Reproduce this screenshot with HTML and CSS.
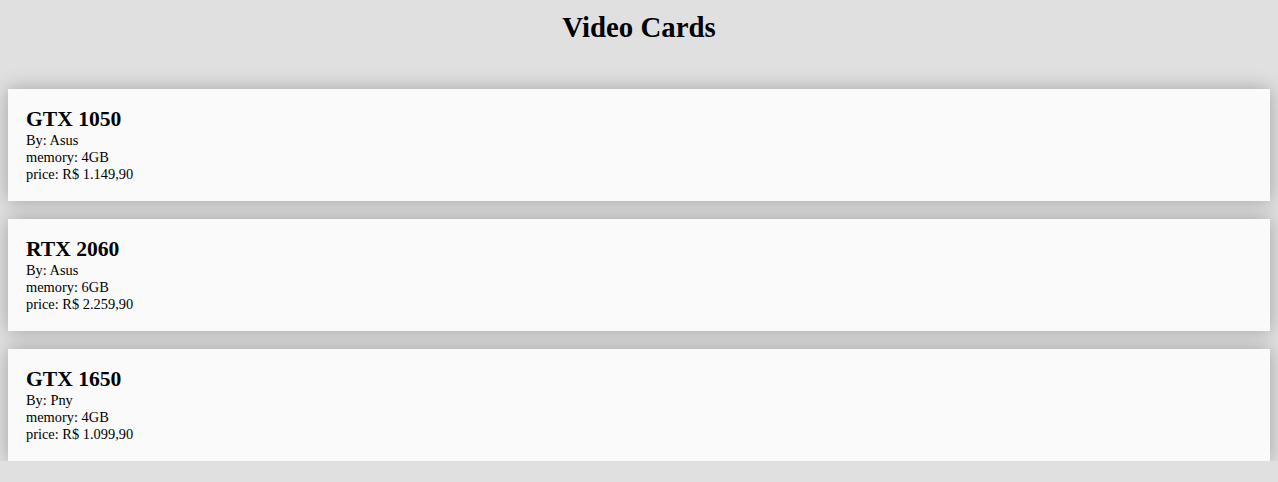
FILE: index.html
```html
<!DOCTYPE html>
<html>
<head>
<meta charset="utf-8">
<title>Video Cards</title>
<link rel="stylesheet" href="styles.css">
</head>
<body>
<h1 class="title">Video Cards</h1>
<main class="list">
  <section class="card">
    <h2 class="card-name">GTX 1050</h2>
    <p class="card-line">By: Asus</p>
    <p class="card-line">memory: 4GB</p>
    <p class="card-line">price: R$ 1.149,90</p>
  </section>
  <section class="card">
    <h2 class="card-name">RTX 2060</h2>
    <p class="card-line">By: Asus</p>
    <p class="card-line">memory: 6GB</p>
    <p class="card-line">price: R$ 2.259,90</p>
  </section>
  <section class="card">
    <h2 class="card-name">GTX 1650</h2>
    <p class="card-line">By: Pny</p>
    <p class="card-line">memory: 4GB</p>
    <p class="card-line">price: R$ 1.099,90</p>
  </section>
</main>
</body>
</html>
```
FILE: styles.css
```css
html, body {
  margin: 0;
  padding: 0;
}
body {
  background: #e0e0e0;
  font-family: "Liberation Serif", "Times New Roman", serif;
  font-size: 14.4px;
  color: #000;
  padding: 11px 8px 0;
}
.title {
  margin: 0;
  font-size: 28.8px;
  line-height: 32px;
  text-align: center;
  font-weight: bold;
}
.list {
  margin-top: 46px;
  display: flex;
  flex-direction: column;
  gap: 18px;
}
.card {
  background: #fafafa;
  padding: 18px 18px 18px;
  box-shadow: 0 0 18px rgba(0, 0, 0, 0.28);
}
.card-name {
  margin: 0;
  font-size: 21.6px;
  line-height: 25px;
  font-weight: bold;
}
.card-line {
  margin: 0;
  line-height: 17px;
}
```
